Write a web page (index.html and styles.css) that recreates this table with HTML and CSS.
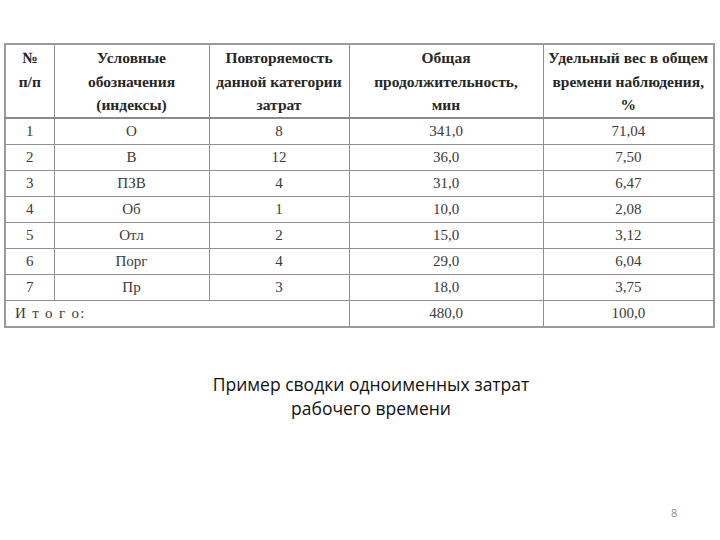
FILE: index.html
```html
<!DOCTYPE html>
<html lang="ru">
<head>
<meta charset="utf-8">
<link rel="stylesheet" href="styles.css">
</head>
<body>
<div class="slide">
  <table class="summary">
    <colgroup>
      <col class="c1"><col class="c2"><col class="c3"><col class="c4"><col class="c5">
    </colgroup>
    <thead>
      <tr>
        <th>№<br>п/п</th>
        <th>Условные<br>обозначения<br>(индексы)</th>
        <th>Повторяемость<br>данной категории<br>затрат</th>
        <th>Общая<br>продолжительность,<br>мин</th>
        <th>Удельный вес в общем<br>времени наблюдения,<br>%</th>
      </tr>
    </thead>
    <tbody>
      <tr><td>1</td><td>О</td><td>8</td><td>341,0</td><td>71,04</td></tr>
      <tr><td>2</td><td>В</td><td>12</td><td>36,0</td><td>7,50</td></tr>
      <tr><td>3</td><td>ПЗВ</td><td>4</td><td>31,0</td><td>6,47</td></tr>
      <tr><td>4</td><td>Об</td><td>1</td><td>10,0</td><td>2,08</td></tr>
      <tr><td>5</td><td>Отл</td><td>2</td><td>15,0</td><td>3,12</td></tr>
      <tr><td>6</td><td>Порг</td><td>4</td><td>29,0</td><td>6,04</td></tr>
      <tr><td>7</td><td>Пр</td><td>3</td><td>18,0</td><td>3,75</td></tr>
      <tr class="total"><td colspan="3" class="label">И т о г о:</td><td>480,0</td><td>100,0</td></tr>
    </tbody>
  </table>
  <p class="caption">Пример сводки одноименных затрат<br>рабочего времени</p>
  <div class="pagenum">8</div>
</div>
</body>
</html>
```
FILE: styles.css
```css
html, body {
  margin: 0;
  padding: 0;
  background: #ffffff;
}
.slide {
  width: 720px;
  height: 540px;
  padding: 43px 0 0 4px;
  box-sizing: border-box;
  position: relative;
}
.summary {
  border-collapse: collapse;
  table-layout: fixed;
  width: 709px;
  font-family: "Liberation Serif", "Times New Roman", serif;
  color: #2e2e2e;
  border: 2px solid #9a9a9a;
}
.c1 { width: 49px; }
.c2 { width: 155px; }
.c3 { width: 140px; }
.c4 { width: 194px; }
.c5 { width: 171px; }
.summary th, .summary td {
  border: 1px solid #8f8f8f;
  text-align: center;
  padding: 0;
}
.summary th {
  font-weight: bold;
  font-size: 15.5px;
  line-height: 23.5px;
  height: 69px;
  padding-top: 1px;
  vertical-align: top;
  color: #262626;
}
.summary thead tr {
  border-bottom: 2px solid #8a8a8a;
}
.summary td {
  font-size: 15px;
  height: 25px;
  line-height: 25px;
  color: #3a3a3a;
}
.summary td.label {
  text-align: left;
  padding-left: 9px;
  letter-spacing: 1.3px;
}
.caption {
  margin: 44px 0 0 0;
  padding-left: 18px;
  text-align: center;
  font-family: "Open Sans", "Noto Sans", sans-serif;
  font-size: 17.5px;
  line-height: 24px;
  color: #111111;
}
.pagenum {
  position: absolute;
  left: 671px;
  top: 505px;
  font-family: "Open Sans", sans-serif;
  font-size: 11px;
  color: #8c8c8c;
}
```
